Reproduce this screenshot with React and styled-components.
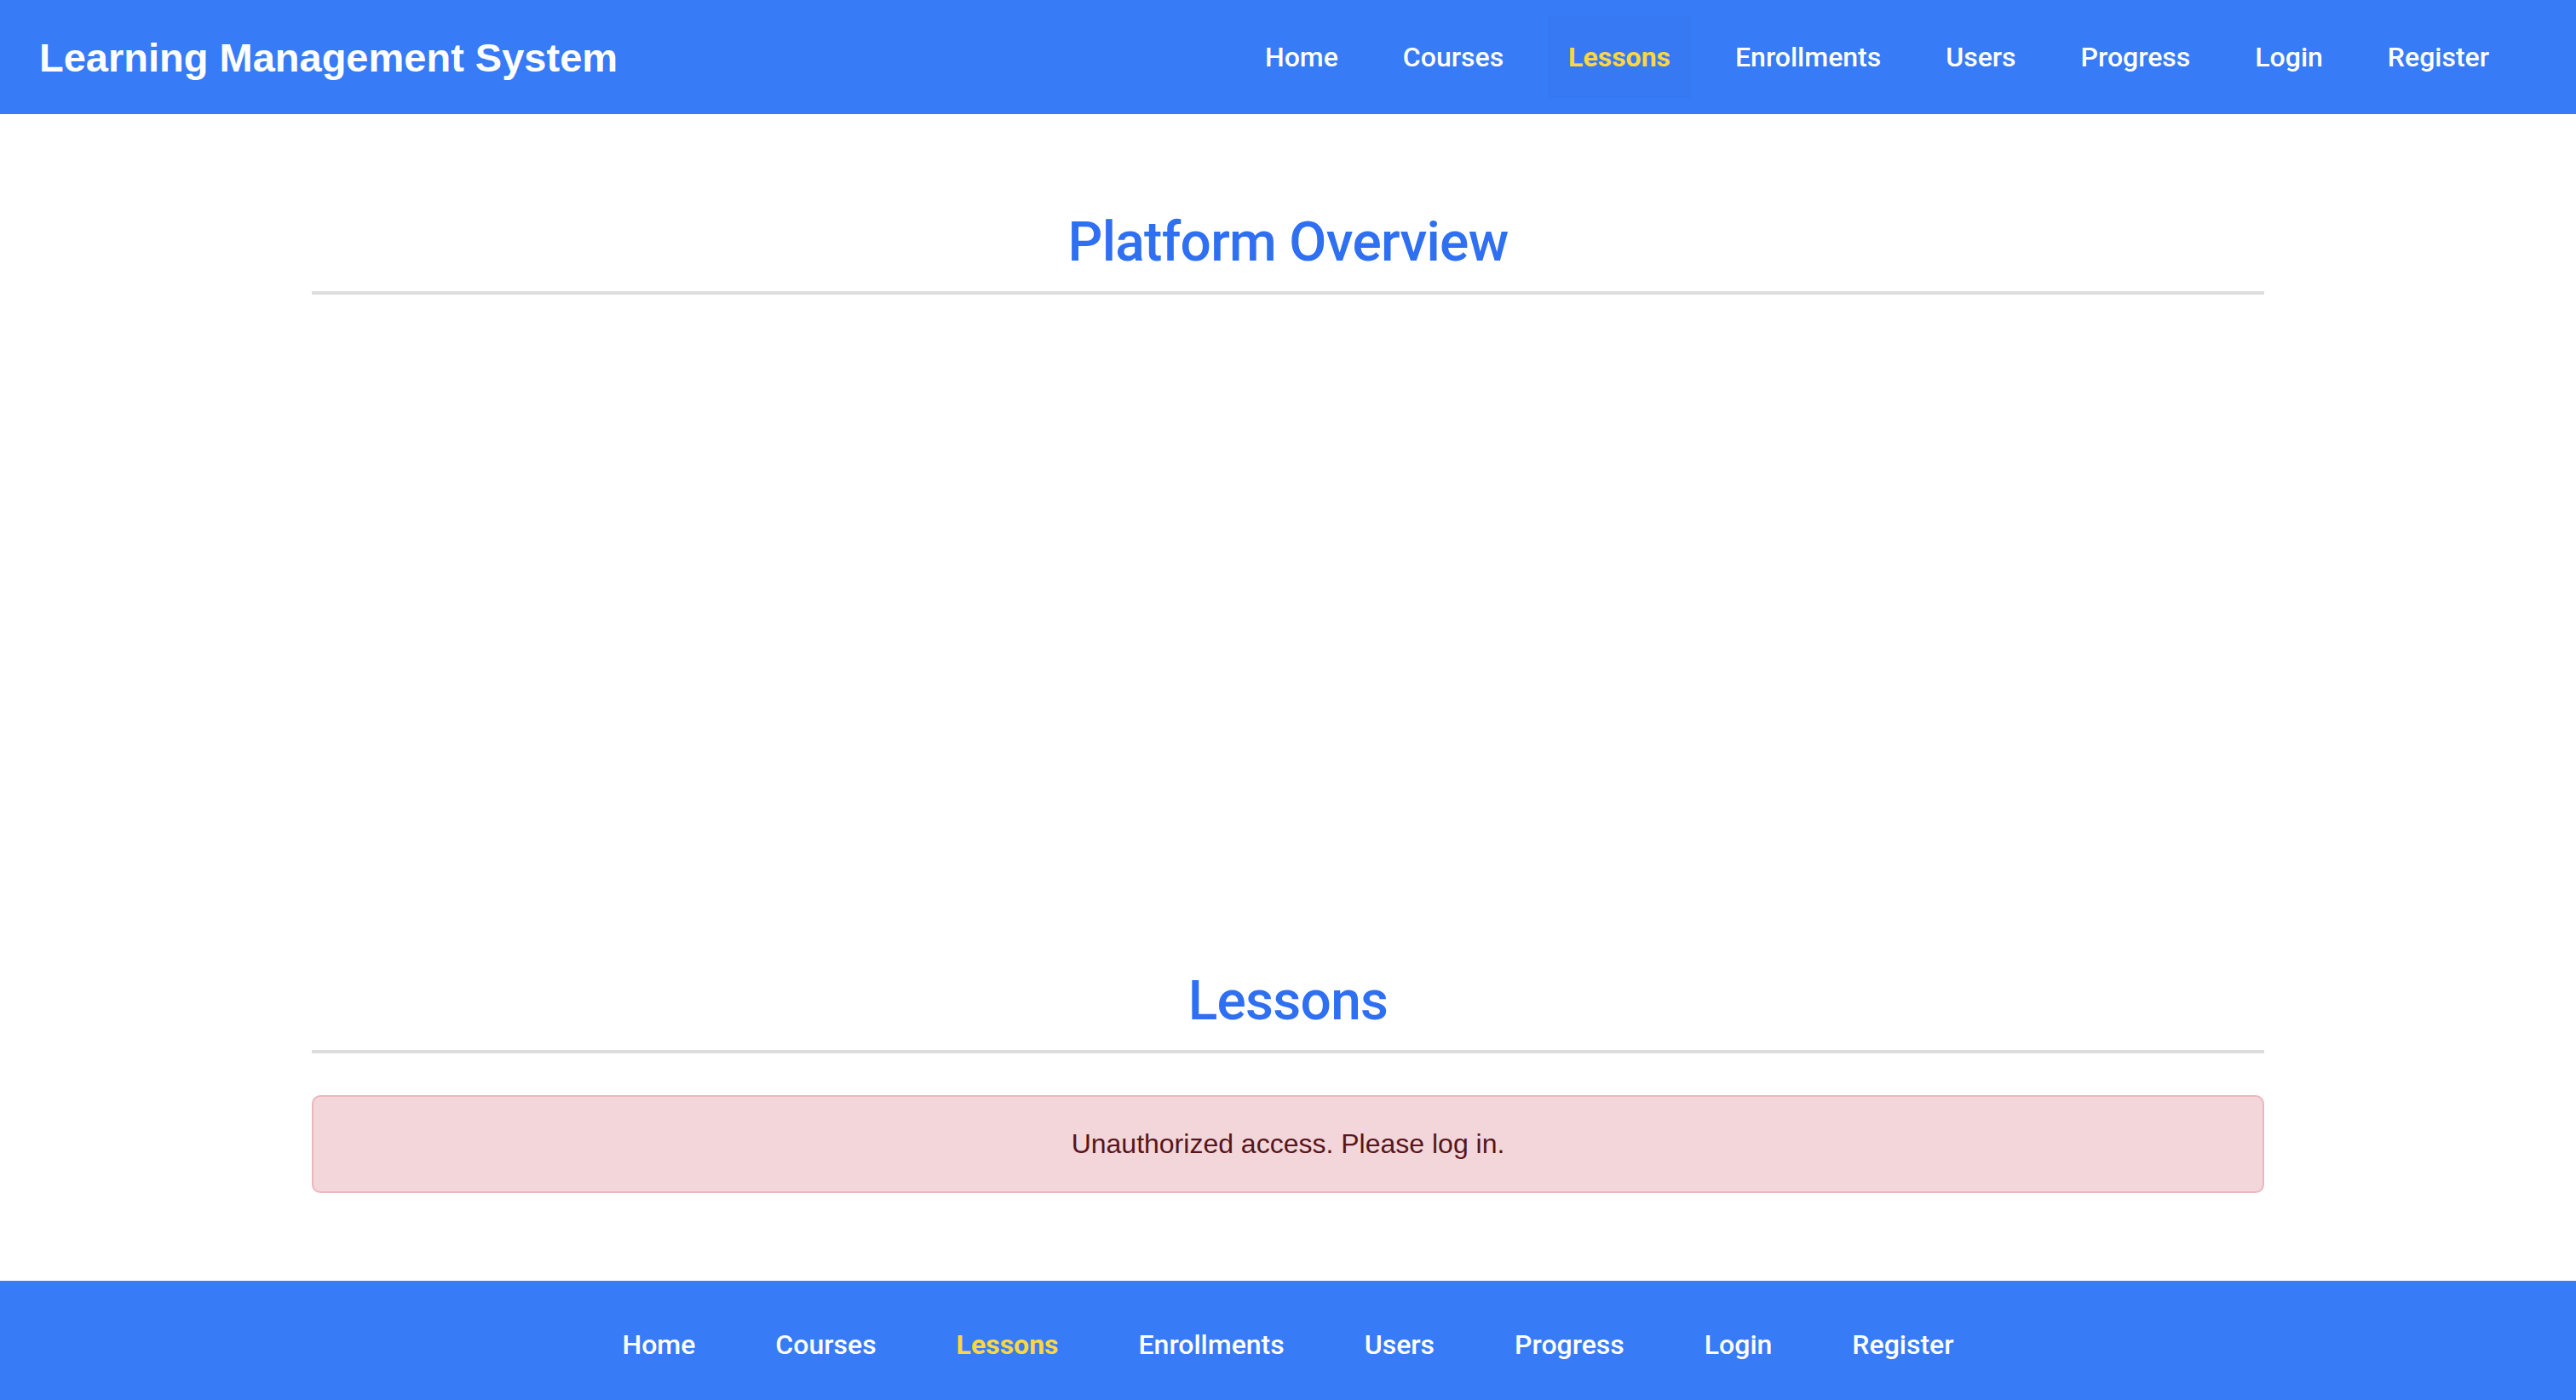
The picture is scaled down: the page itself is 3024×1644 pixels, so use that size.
import React from 'react';
import styled, { createGlobalStyle } from 'styled-components';

const GlobalStyle = createGlobalStyle`
  html, body {
    margin: 0;
    padding: 0;
    background: #ffffff;
  }
  body {
    font-family: "Liberation Sans", Arial, sans-serif;
  }
  * {
    box-sizing: border-box;
  }
`;

const Page = styled.div`
  min-height: 100vh;
  display: flex;
  flex-direction: column;
`;

const Header = styled.header`
  height: 134px;
  padding: 0 78px 0 46px;
  background: #377bf6;
  display: flex;
  align-items: center;
  justify-content: space-between;
`;

const Brand = styled.h1`
  margin: 0;
  font-family: "Liberation Sans", Arial, sans-serif;
  font-size: 47px;
  font-weight: 700;
  color: #ffffff;
`;

const Nav = styled.nav`
  display: flex;
  align-items: center;
  gap: ${(p) => p.$gap}px;
`;

const NavLink = styled.a`
  display: flex;
  align-items: center;
  height: ${(p) => (p.$boxed ? '98px' : 'auto')};
  padding: ${(p) => (p.$boxed ? '0 24px' : '0')};
  font-family: Roboto, "Liberation Sans", sans-serif;
  font-size: 32px;
  font-weight: ${(p) => (p.$active ? 700 : 500)};
  color: ${(p) => (p.$active ? '#fdd73f' : '#ffffff')};
  background: ${(p) => (p.$active && p.$boxed ? 'rgba(0, 0, 0, 0.012)' : 'transparent')};
  text-decoration: none;
  cursor: pointer;
`;

const Main = styled.main`
  flex: 1;
  width: 2292px;
  margin: 0 auto;
  padding-top: 113px;
`;

const SectionTitle = styled.h2`
  margin: 0;
  padding-bottom: 18px;
  border-bottom: 4px solid #dddddd;
  text-align: center;
  font-family: Roboto, "Liberation Sans", sans-serif;
  font-size: 64px;
  font-weight: 500;
  line-height: 1.2;
  letter-spacing: -0.7px;
  color: #2f6ff1;
`;

const ChartArea = styled.div`
  height: 792px;
`;

const Alert = styled.div`
  margin-top: 49px;
  padding: 37px 24px;
  border: 2px solid #ebb7bc;
  border-radius: 10px;
  background: #f2d6d9;
  color: #58151c;
  text-align: center;
  font-size: 32px;
  line-height: 37px;
`;

const Footer = styled.footer`
  height: 140px;
  padding-top: 10px;
  background: #377bf6;
  display: flex;
  align-items: center;
  justify-content: center;
`;

const links = ['Home', 'Courses', 'Lessons', 'Enrollments', 'Users', 'Progress', 'Login', 'Register'];
const current = 'Lessons';

const App = () => {
  return (
    <Page>
      <GlobalStyle />
      <Header>
        <Brand>Learning Management System</Brand>
        <Nav $gap={28}>
          {links.map((label) => (
            <NavLink key={label} $boxed $active={label === current}>
              {label}
            </NavLink>
          ))}
        </Nav>
      </Header>

      <Main>
        <SectionTitle>Platform Overview</SectionTitle>
        <ChartArea />
        <SectionTitle>Lessons</SectionTitle>
        <Alert>Unauthorized access. Please log in.</Alert>
      </Main>

      <Footer>
        <Nav $gap={94}>
          {links.map((label) => (
            <NavLink key={label} $active={label === current}>
              {label}
            </NavLink>
          ))}
        </Nav>
      </Footer>
    </Page>
  );
};

export default App;
